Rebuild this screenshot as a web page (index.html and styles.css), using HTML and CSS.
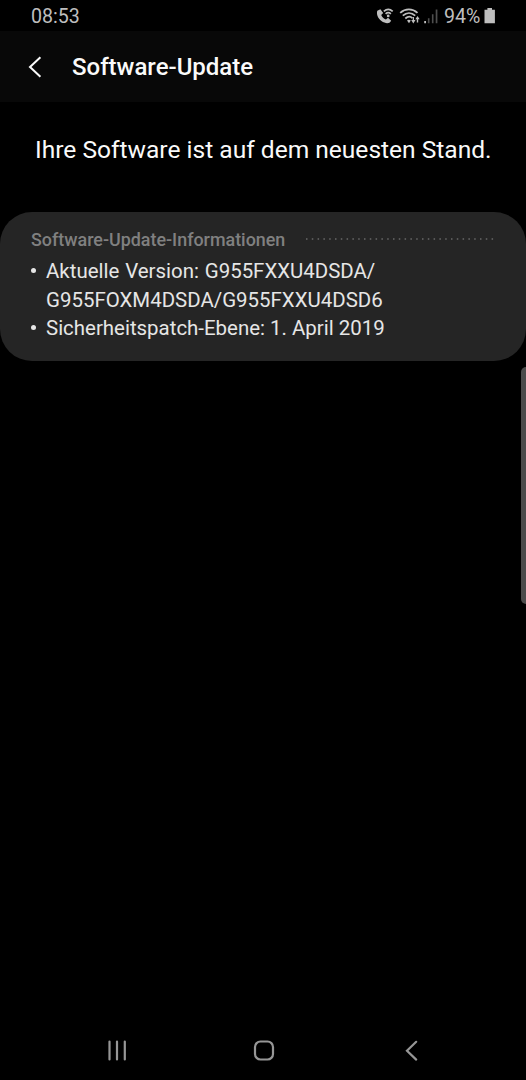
FILE: index.html
```html
<!DOCTYPE html>
<html lang="de">
<head>
<meta charset="utf-8">
<title>Software-Update</title>
<link rel="stylesheet" href="styles.css">
</head>
<body>
<div class="screen">
  <header class="status-bar">
    <span class="clock">08:53</span>
    <div class="status-right">
      <svg class="status-icons" width="64" height="18" viewBox="0 0 64 18">
        <path class="solid" d="M1.300 2.700L4.400 1.200L7.200 5.100L5.200 6.900C6.100 9 7.700 10.500 9.900 11.500L12 9.800L15.200 12.800C13.700 15.400 11.300 15.900 8.400 14.600C3.600 12.600-.2 7.500 1.300 2.700Z"/>
        <path class="arc" stroke-width="1.700" d="M7.800 3.400C10.600.8 14 .8 16.700 3.400M9.600 5.800C11.300 4.300 13.200 4.300 14.900 5.800"/>
        <circle class="solid" cx="12.200" cy="7.900" r="1.400"/>
        <path class="arc" stroke-width="1.800" d="M24.200 4.800C29.400.1 36.300.1 41.500 4.800M26.800 7.700C30.600 4.300 35.400 4.300 39.200 7.700M29.300 10.500C31.800 8.300 34.500 8.300 36.400 10.100"/>
        <path class="solid" d="M31 12.600Q33 11 34.800 12.600L33 15.200ZM35.200 12H36.700V8.900H38V12H39.500L37.300 15.400ZM39.400 11.200L41.500 7.900L43.700 11.200H42.200V14.400H40.800V11.200Z"/>
        <path class="solid" d="M48.200 13H50V15.300H48.200Z"/>
        <path class="dim" d="M51.900 10.200H53.500V15.300H51.900ZM55.900 6.200H57.500V15.300H55.900ZM59.700 1.500H61.400V15.300H59.700Z"/>
      </svg>
      <span class="percent">94%</span>
      <svg class="battery" width="12" height="18" viewBox="0 0 12 18">
        <path class="solid" d="M3.400 1H8V2.800H10.900V16.200H.5V2.800H3.400Z"/>
      </svg>
    </div>
  </header>
  <div class="title-bar">
    <svg class="back" width="16" height="24" viewBox="0 0 16 24"><path d="M13.400 2.300L3 12L13.400 21.700"/></svg>
    <h1 class="title">Software-Update</h1>
  </div>
  <main class="content">
    <p class="message">Ihre Software ist auf dem neuesten Stand.</p>
    <section class="card">
      <div class="card-head">
        <h2 class="card-title">Software-Update-Informationen</h2>
        <svg class="dots" width="189" height="2" viewBox="0 0 189 2"><path d="M0 1H188"/></svg>
      </div>
      <ul class="info">
        <li class="item"><span class="bullet"></span><span class="text">Aktuelle Version: G955FXXU4DSDA/<br>G955FOXM4DSDA/G955FXXU4DSD6</span></li>
        <li class="item item-patch"><span class="bullet"></span><span class="text">Sicherheitspatch-Ebene: 1. April 2019</span></li>
      </ul>
    </section>
  </main>
  <nav class="nav-bar">
    <svg width="22" height="24" viewBox="0 0 22 24"><path class="nav-line" d="M2.500 3.500V21.500M10 3.500V21.500M17.800 3.500V21.500"/></svg>
    <svg width="24" height="24" viewBox="0 0 24 24"><rect class="nav-line" x="3" y="3.500" width="18" height="18" rx="5.500"/></svg>
    <svg width="24" height="24" viewBox="0 0 24 24"><path class="nav-line" d="M16.200 3.800L7 12.700L16.200 21.600"/></svg>
  </nav>
  <div class="edge-handle"></div>
</div>
</body>
</html>
```
FILE: styles.css
```css
* { box-sizing: border-box; margin: 0; padding: 0; }
body { background: #000; font-family: Roboto, "Liberation Sans", sans-serif; }
svg { display: block; flex: none; }
.screen {
  position: relative;
  display: flex;
  flex-direction: column;
  width: 526px;
  height: 1080px;
  overflow: hidden;
  background: #000;
  white-space: nowrap;
}
.status-bar {
  display: flex;
  justify-content: space-between;
  height: 31px;
  padding: 0 30px 0 31px;
  color: #bebebe;
  font-size: 19.600px;
  line-height: 33px;
}
.status-right { display: flex; }
.status-icons { margin: 8px 4px 0 0; }
.percent { width: 40px; }
.battery { margin-top: 7px; }
.solid { fill: #bebebe; }
.dim { fill: #4e4e4e; }
.arc { fill: none; stroke: #bebebe; }
.title-bar {
  display: flex;
  align-items: center;
  height: 71px;
  padding-left: 27px;
  background: #080808;
  color: #fafafa;
}
.back { fill: none; stroke: #fafafa; stroke-width: 2; }
.title { margin-left: 29px; padding-top: 1px; font-size: 24px; font-weight: 500; line-height: 30px; }
.content { flex: 1; }
.message {
  padding: 33px 0 31px 35px;
  color: #fafafa;
  font-size: 24.550px;
  line-height: 30px;
  height: 110px;
}
.card {
  height: 149px;
  padding: 17px 31px 0 30px;
  border-radius: 32px;
  background: #252525;
}
.card-head { display: flex; align-items: center; justify-content: space-between; height: 22px; }
.card-title { padding-left: 1px; color: #808080; font-size: 17.900px; font-weight: 500; line-height: 22px; }
.dots { margin-top: -2px; stroke: #686868; stroke-width: 1.500; stroke-dasharray: 1.500 4.300; }
.info { list-style: none; padding-top: 6px; color: #e6e6e6; font-size: 20.450px; line-height: 29px; }
.item { display: flex; word-spacing: .8px; }
.item-patch { line-height: 27px; word-spacing: 0; }
.bullet { width: 5px; height: 5px; margin: 11px 10px 0 1px; border-radius: 50%; background: #e6e6e6; }
.item-patch .bullet { margin-top: 10px; }
.nav-bar {
  display: flex;
  justify-content: space-between;
  height: 60px;
  padding: 18px 102px 0 107px;
}
.nav-bar svg:nth-child(2) { margin-right: 1px; }
.nav-line { fill: none; stroke: #969696; stroke-width: 2.200; stroke-linecap: round; }
.edge-handle {
  position: absolute;
  top: 367px;
  right: 0;
  width: 5px;
  height: 237px;
  border-radius: 5px 0 0 5px;
  background: #4b4b4b;
}
```
